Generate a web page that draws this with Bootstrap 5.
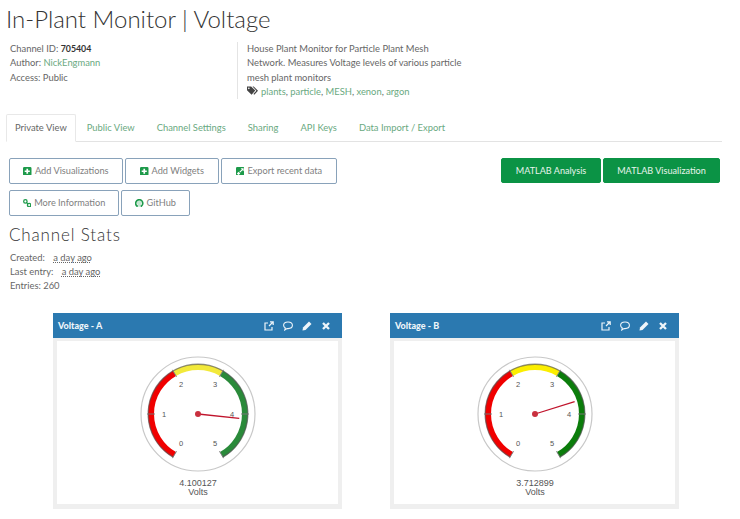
<!DOCTYPE html>
<html lang="en">
<head>
<meta charset="utf-8">
<title>In-Plant Monitor | Voltage</title>
<link href="https://cdn.jsdelivr.net/npm/bootstrap@5.3.0/dist/css/bootstrap.min.css" rel="stylesheet">
<style>
html,body{height:519px;overflow:hidden}
body{font-family:Lato,"Liberation Sans",sans-serif;font-size:9.4px;line-height:14.4px;color:#666;background:#fff}
a{color:#6aa97f;text-decoration:none}
.page-wrap{padding:7px 18px 0 6px}
.chan-title{font-family:Lato,sans-serif;font-weight:300;font-size:24px;line-height:24px;letter-spacing:0;color:#333;margin:0 0 11px}
.meta-top{height:57px}
.meta-left{width:231px;padding:0 0 0 4px}
.meta-right{width:229px;padding:0 0 0 9px;border-left:1px solid #e4e4e4}
.meta-right p{margin:0}
.meta-left strong{color:#333;font-weight:700;font-size:8.800px}
.tag-svg{width:11px;height:10px;margin-right:3px;vertical-align:-1px}
.tabs-wrap{margin-top:15px;border-bottom:1px solid #e3e3e3;--bs-nav-tabs-border-color:#e3e3e3}
.tabs-wrap .nav-link{font-size:9.4px;line-height:14px;padding:6px 10px;color:#6aa97f;border:1px solid transparent;border-radius:2px 2px 0 0;height:28px}
.tabs-wrap .nav-link.active{color:#666;border-color:#e8e8e8 #e8e8e8 #fff;background:#fff;padding-left:8px;padding-right:8px}
.act-row{padding:16px 0 0 3px;display:flex;justify-content:space-between;align-items:flex-start}
.act-left{display:flex;flex-wrap:wrap;gap:6px 2px;width:340px}
.act-btn{font-family:Lato,sans-serif;font-size:9.2px;line-height:14px;height:26px;padding:5px 0;color:#808080;border:1px solid #89a2ba;border-radius:2px;background:#fff;display:inline-flex;align-items:center;justify-content:center;gap:3px}
.w-viz{width:114px}.w-wid{width:94px}.w-exp{width:116px}.w-inf{width:110px}.w-git{width:69px}
.act-btn svg{width:8.500px;height:8.500px;flex:none}
.act-right{display:flex;gap:2px;margin-right:2px}
.mat-btn{font-family:Lato,sans-serif;font-size:9.100px;line-height:14px;height:25px;padding:5px 0;color:#e8f3ec;background:#0b9345;border:1px solid #0b9345;border-radius:2px;display:inline-flex;align-items:center;justify-content:center}
.w-ana{width:100px}.w-vis{width:117px}
.stats-title{font-family:Lato,sans-serif;font-weight:300;font-size:17px;line-height:20px;letter-spacing:.85px;color:#333;margin:9px 0 6px 3px}
.stats-list{padding-left:4px;line-height:13.800px}
.stats-list abbr{color:#666;text-decoration:underline dotted #666;margin-left:6px}
.gauge-row{display:flex;gap:48px;padding:21px 0 0 47px}
.wid-card{width:289px;height:196px;flex:none;border:0;border-radius:0;background:#efefef;padding:0 4px 5px}
.wid-head{margin:0 -4px;height:25px;background:#2b79b0;color:#eef5fa;padding:0 11px 0 5px;font-weight:900;font-size:9px;display:flex;align-items:center;justify-content:space-between}
.wid-icons{display:flex;gap:9px;align-items:center}
.wid-icons svg{width:10px;height:10px;display:block}
.wid-body{background:#fff;height:163px;margin-top:3px}
.gauge-svg{display:block;margin:0 auto}
.g-lab{font-family:"Liberation Sans",sans-serif;font-size:7.500px;fill:#555;text-anchor:middle;dominant-baseline:central}
.g-val{font-family:"Liberation Sans",sans-serif;font-size:9px;fill:#555;text-anchor:middle}
</style>
</head>
<body>
<div class="page-wrap">
  <h1 class="chan-title">In-Plant Monitor | Voltage</h1>
  <div class="d-flex meta-top">
    <div class="meta-left">
      <div>Channel ID: <strong>705404</strong></div>
      <div>Author: <a href="#">NickEngmann</a></div>
      <div>Access: Public</div>
    </div>
    <div class="meta-right">
      <p>House Plant Monitor for Particle Plant Mesh Network. Measures Voltage levels of various particle mesh plant monitors</p>
      <p><svg class="tag-svg" viewBox="0 0 12 10"><path fill="#444" d="M0 0h4.500L9 4.500 5 9 0 4.200zM2 1.200a.9.900 0 1 0 0 1.800.9.900 0 0 0 0-1.800z" fill-rule="evenodd"/><path fill="#444" d="M6 0h1.300L12 4.600 8 9l-1-.8 3.200-3.600z"/></svg><a href="#">plants</a>, <a href="#">particle</a>, <a href="#">MESH</a>, <a href="#">xenon</a>, <a href="#">argon</a></p>
    </div>
  </div>
  <ul class="nav nav-tabs tabs-wrap">
    <li class="nav-item"><a class="nav-link active" href="#">Private View</a></li>
    <li class="nav-item"><a class="nav-link" href="#">Public View</a></li>
    <li class="nav-item"><a class="nav-link" href="#">Channel Settings</a></li>
    <li class="nav-item"><a class="nav-link" href="#">Sharing</a></li>
    <li class="nav-item"><a class="nav-link" href="#">API Keys</a></li>
    <li class="nav-item"><a class="nav-link" href="#">Data Import / Export</a></li>
  </ul>
  <div class="act-row">
    <div class="act-left">
      <button class="btn act-btn w-viz"><svg viewBox="0 0 10 10"><path fill="#1d9a4a" fill-rule="evenodd" d="M1.500 0h7A1.500 1.500 0 0 1 10 1.500v7A1.500 1.500 0 0 1 8.500 10h-7A1.500 1.500 0 0 1 0 8.500v-7A1.500 1.500 0 0 1 1.500 0zM4 2v2H2v2h2v2h2V6h2V4H6V2z"/></svg>Add Visualizations</button>
      <button class="btn act-btn w-wid"><svg viewBox="0 0 10 10"><path fill="#1d9a4a" fill-rule="evenodd" d="M1.500 0h7A1.500 1.500 0 0 1 10 1.500v7A1.500 1.500 0 0 1 8.500 10h-7A1.500 1.500 0 0 1 0 8.500v-7A1.500 1.500 0 0 1 1.500 0zM4 2v2H2v2h2v2h2V6h2V4H6V2z"/></svg>Add Widgets</button>
      <button class="btn act-btn w-exp"><svg viewBox="0 0 10 10"><path fill="#1d9a4a" fill-rule="evenodd" d="M1.500 0h7A1.500 1.500 0 0 1 10 1.500v7A1.500 1.500 0 0 1 8.500 10h-7A1.500 1.500 0 0 1 0 8.500v-7A1.500 1.500 0 0 1 1.500 0zM5.500 1.500 6.800 2.800 4 5.600 4.900 6.500 7.700 3.700 9 5V1.500zM1 7.500 3 5.500 5 7.500 3 9.500z"/></svg>Export recent data</button>
      <button class="btn act-btn w-inf"><svg viewBox="0 0 10 10"><g fill="none" stroke="#1d9a4a" stroke-width="1.500"><circle cx="2.800" cy="2.800" r="2"/><circle cx="7.200" cy="7.200" r="2"/><path d="M4 4l2 2"/></g></svg>More Information</button>
      <button class="btn act-btn w-git"><svg viewBox="0 0 10 10"><g fill="none" stroke="#1d9a4a"><path stroke-width="1.900" d="M3.200 8.900C1.700 8.200.8 6.700.8 5A4.200 4.200 0 0 1 9.200 5c0 1.700-.9 3.200-2.400 3.900"/></g><path fill="#1d9a4a" d="M2 1h1.500l1 1h1l1-1H8l.3 3L7 6.200v2.800H3V6.200L1.700 4z" opacity=".25"/></svg>GitHub</button>
    </div>
    <div class="act-right">
      <button class="btn mat-btn w-ana">MATLAB Analysis</button>
      <button class="btn mat-btn w-vis">MATLAB Visualization</button>
    </div>
  </div>
  <h2 class="stats-title">Channel Stats</h2>
  <div class="stats-list">
    <div>Created: <abbr title="">a day ago</abbr></div>
    <div>Last entry: <abbr title="">a day ago</abbr></div>
    <div>Entries: 260</div>
  </div>
  <div class="gauge-row">
    <div class="wid-card">
      <div class="wid-head"><span>Voltage - A</span>
        <div class="wid-icons">
          <svg viewBox="0 0 10 10"><path fill="none" stroke="#eef5fa" stroke-width="1.200" d="M8 6v3H1V2h3M5 5l4-4M6 .8h3.200V4"/></svg>
          <svg viewBox="0 0 10 10"><path fill="none" stroke="#eef5fa" stroke-width="1.100" d="M5 1c2.500 0 4.400 1.400 4.400 3.300S7.500 7.600 5 7.600H4L1.800 9l.5-2C1.200 6.400.6 5.400.6 4.300.6 2.400 2.500 1 5 1z"/></svg>
          <svg viewBox="0 0 10 10"><path fill="#eef5fa" d="M7 .5 9.500 3 3.500 9 .5 9.500 1 6.500z"/></svg>
          <svg viewBox="0 0 10 10"><path fill="none" stroke="#eef5fa" stroke-width="2.300" d="M2 2l6 6M8 2l-6 6"/></svg>
        </div>
      </div>
      <div class="wid-body" id="bodyA"></div>
    </div>
    <div class="wid-card">
      <div class="wid-head"><span>Voltage - B</span>
        <div class="wid-icons">
          <svg viewBox="0 0 10 10"><path fill="none" stroke="#eef5fa" stroke-width="1.200" d="M8 6v3H1V2h3M5 5l4-4M6 .8h3.200V4"/></svg>
          <svg viewBox="0 0 10 10"><path fill="none" stroke="#eef5fa" stroke-width="1.100" d="M5 1c2.500 0 4.400 1.400 4.400 3.300S7.500 7.600 5 7.600H4L1.800 9l.5-2C1.200 6.400.6 5.400.6 4.300.6 2.400 2.500 1 5 1z"/></svg>
          <svg viewBox="0 0 10 10"><path fill="#eef5fa" d="M7 .5 9.500 3 3.500 9 .5 9.500 1 6.500z"/></svg>
          <svg viewBox="0 0 10 10"><path fill="none" stroke="#eef5fa" stroke-width="2.300" d="M2 2l6 6M8 2l-6 6"/></svg>
        </div>
      </div>
      <div class="wid-body" id="bodyB"></div>
    </div>
  </div>
</div>
<script>
function pt(r,deg){var a=deg*Math.PI/180;return [(r*Math.sin(a)).toFixed(2),(-r*Math.cos(a)).toFixed(2)];}
function arc(r,a,b){var p=pt(r,a),q=pt(r,b);return 'M'+p[0]+' '+p[1]+'A'+r+' '+r+' 0 '+((b-a)>180?1:0)+' 1 '+q[0]+' '+q[1];}
function gauge(id,val,green,yellow){
  var c=[[-150,-30,'#f00000'],[-30,30,yellow],[30,150,green]],s='';
  s+='<circle r="57" fill="#fff" stroke="#c8c8c8" stroke-width="1.200"/>';
  c.forEach(function(x){s+='<path d="'+arc(47,x[0],x[1])+'" fill="none" stroke="'+x[2]+'" stroke-width="6"/>';});
  s+='<path d="'+arc(49.800,-150,150)+'" fill="none" stroke="#555" stroke-opacity=".65" stroke-width="1.400"/>';
  for(var i=0;i<=5;i++){var d=-150+60*i,a=pt(43,d),b=pt(51,d),l=pt(34,d);
    s+='<path d="M'+a[0]+' '+a[1]+'L'+b[0]+' '+b[1]+'" stroke="#777" stroke-width="1"/>';
    s+='<text class="g-lab" x="'+l[0]+'" y="'+l[1]+'">'+i+'</text>';}
  var n=pt(41.500,-150+60*val);
  s+='<path d="M0 0L'+n[0]+' '+n[1]+'" stroke="#c0142c" stroke-width="1.300"/><circle r="3" fill="#c9303f"/>';
  s+='<text class="g-val" x="0" y="72">'+val.toFixed(6)+'</text><text class="g-val" x="0" y="81">Volts</text>';
  document.getElementById(id).innerHTML='<svg class="gauge-svg" width="160" height="163" viewBox="-80 -73 160 163">'+s+'</svg>';
}
gauge('bodyA',4.100127,'#2a8a3a','#f2e93a');gauge('bodyB',3.712899,'#0b7d0b','#fbee00');
</script>
<script src="https://cdn.jsdelivr.net/npm/bootstrap@5.3.0/dist/js/bootstrap.bundle.min.js"></script>
</body>
</html>
